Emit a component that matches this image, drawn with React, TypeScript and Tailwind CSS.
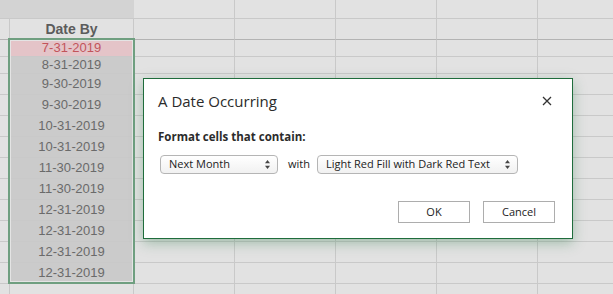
import React from "react";

const dates = [
  "7-31-2019",
  "8-31-2019",
  "9-30-2019",
  "9-30-2019",
  "10-31-2019",
  "10-31-2019",
  "11-30-2019",
  "11-30-2019",
  "12-31-2019",
  "12-31-2019",
  "12-31-2019",
  "12-31-2019",
];

const heights = [17, 17, 21, 21, 21, 21, 21, 21, 21, 21, 21, 21];

function Cells({ b, bClass, bottom }: { b?: React.ReactNode; bClass?: string; bottom: string }) {
  return (
    <>
      <div className={`w-[10px] shrink-0 border-r border-[#c9c9c9] ${bottom}`} />
      <div className={`w-[124px] shrink-0 border-r border-[#c9c9c9] flex items-center justify-center ${bClass ?? ""} ${bottom}`}>{b}</div>
      <div className={`w-[101px] shrink-0 border-r border-[#c9c9c9] ${bottom}`} />
      <div className={`w-[101px] shrink-0 border-r border-[#c9c9c9] ${bottom}`} />
      <div className={`w-[101px] shrink-0 border-r border-[#c9c9c9] ${bottom}`} />
      <div className={`w-[101px] shrink-0 border-r border-[#c9c9c9] ${bottom}`} />
      <div className={`flex-1 ${bottom}`} />
    </>
  );
}

function Arrows() {
  return (
    <svg width="7" height="11" viewBox="0 0 7 11" className="shrink-0">
      <path d="M3.5 1 L6 4.2 L1 4.2 Z" fill="#444" />
      <path d="M3.5 10 L6 6.8 L1 6.8 Z" fill="#444" />
    </svg>
  );
}

export default function App() {
  return (
    <div
      className="relative w-[613px] h-[294px] overflow-hidden bg-[#e2e2e2]"
      style={{ fontFamily: '"Liberation Sans", Arial, sans-serif' }}
    >
      {/* top strip */}
      <div className="flex h-[19px]">
        <div className="w-[134px] shrink-0 bg-[#d3d3d3] border-b border-[#c9c9c9]" />
        <div className="w-[101px] shrink-0 border-r border-b border-[#c9c9c9]" />
        <div className="w-[101px] shrink-0 border-r border-b border-[#c9c9c9]" />
        <div className="w-[101px] shrink-0 border-r border-b border-[#c9c9c9]" />
        <div className="w-[101px] shrink-0 border-r border-b border-[#c9c9c9]" />
        <div className="flex-1 border-b border-[#c9c9c9]" />
      </div>
      {/* header row */}
      <div className="flex h-[21px]">
        <Cells
          bottom="border-b border-b-[#b3b3b3]"
          b={<span className="text-[14px] font-bold text-[#5c5c5c]">Date By</span>}
        />
      </div>
      {dates.map((d, i) => (
        <div key={i} className="flex" style={{ height: heights[i] }}>
          <Cells
            bottom="border-b border-b-[#c9c9c9]"
            bClass={i === 0 ? "bg-[#e4c4c8]" : "bg-[#cbcbcb]"}
            b={
              <span className={`text-[13px] ${i === 0 ? "text-[#c2545b]" : "text-[#6a6a6a]"}`}>{d}</span>
            }
          />
        </div>
      ))}
      <div className="flex h-[20px]">
        <Cells bottom="" />
      </div>

      {/* selection outline */}
      <div className="absolute left-[8px] top-[38px] w-[127px] h-[246px] border-2 border-[#6f9f80] shadow-[inset_0_0_0_1px_#e4e4e4] pointer-events-none" />

      {/* dialog */}
      <div
        className="absolute left-[143px] top-[78px] w-[430px] h-[161px] bg-white border border-[#1f6d3c] shadow-[0_4px_12px_rgba(40,120,70,0.35)] flex flex-col"
        style={{ fontFamily: '"Open Sans", "Noto Sans", sans-serif' }}
      >
        <div className="flex items-center justify-between pl-[14px] pr-[20px] pt-[10px] h-[34px]">
          <span className="text-[15px] text-[#2b2b2b]">A Date Occurring</span>
          <svg width="10" height="10" viewBox="0 0 10 10">
            <path d="M1 1 L9 9 M9 1 L1 9" stroke="#333" strokeWidth="1.3" />
          </svg>
        </div>
        <div className="pl-[14px] mt-[16px] text-[11.5px] font-bold text-[#2b2b2b] leading-[16px]">
          Format cells that contain:
        </div>
        <div className="flex items-center pl-[16px] mt-[10px] whitespace-nowrap">
          <div className="w-[118px] h-[19px] rounded-[4px] border border-[#b5b5b5] bg-gradient-to-b from-white to-[#f1f1f1] flex items-center justify-between pl-[8px] pr-[6px] text-[11px] text-[#222]">
            <span>Next Month</span>
            <Arrows />
          </div>
          <span className="ml-[10px] text-[11px] text-[#222]">with</span>
          <div className="ml-[7px] w-[201px] h-[19px] rounded-[4px] border border-[#b5b5b5] bg-gradient-to-b from-white to-[#f1f1f1] flex items-center justify-between pl-[8px] pr-[6px] text-[11px] text-[#222]">
            <span>Light Red Fill with Dark Red Text</span>
            <Arrows />
          </div>
        </div>
        <div className="flex justify-end gap-[13px] pr-[17px] mt-[27px]">
          <div className="w-[72px] h-[22px] border border-[#adadad] bg-white flex items-center justify-center text-[11px] text-[#222]">
            OK
          </div>
          <div className="w-[72px] h-[22px] border border-[#adadad] bg-white flex items-center justify-center text-[11px] text-[#222]">
            Cancel
          </div>
        </div>
      </div>
    </div>
  );
}
